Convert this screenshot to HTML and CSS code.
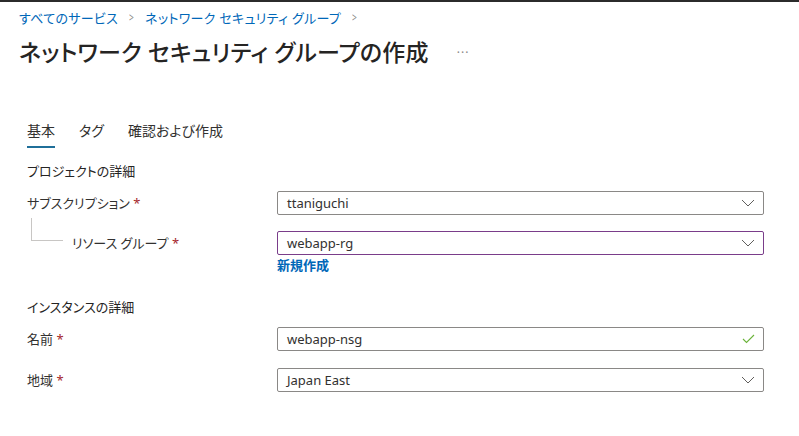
FILE: index.html
```html
<!DOCTYPE html>
<html lang="ja">
<head>
  <meta charset="UTF-8">
  <title>ネットワーク セキュリティ グループの作成</title>
  <link rel="stylesheet" href="styles.css">
</head>
<body>

<div class="topbar"></div>

<header class="page-head">
  <nav class="crumbs">
    <a href="#">すべてのサービス</a>
    <span class="sep">&gt;</span>
    <a href="#">ネットワーク セキュリティ グループ</a>
    <span class="sep">&gt;</span>
  </nav>
  <div class="title-row">
    <h1>ネットワーク セキュリティ グループの作成</h1>
    <span class="more">···</span>
  </div>
</header>

<main class="form">
  <div class="tabs">
    <div class="tab active">基本</div>
    <div class="tab">タグ</div>
    <div class="tab">確認および作成</div>
  </div>

  <h2 class="section first">プロジェクトの詳細</h2>

  <div class="row">
    <label class="label">サブスクリプション <span class="req">*</span></label>
    <div class="control">
      <div class="select">
        <span>ttaniguchi</span>
        <svg class="chev" width="14" height="8" viewBox="0 0 14 8"><path d="M1 1 L7 7 L13 1" fill="none" stroke="#605e5c" stroke-width="1"/></svg>
      </div>
    </div>
  </div>

  <div class="row child">
    <label class="label">リソース グループ <span class="req">*</span></label>
    <div class="control">
      <div class="select dirty">
        <span>webapp-rg</span>
        <svg class="chev" width="14" height="8" viewBox="0 0 14 8"><path d="M1 1 L7 7 L13 1" fill="none" stroke="#605e5c" stroke-width="1"/></svg>
      </div>
      <a class="new-link" href="#">新規作成</a>
    </div>
  </div>

  <h2 class="section">インスタンスの詳細</h2>

  <div class="row">
    <label class="label">名前 <span class="req">*</span></label>
    <div class="control">
      <div class="select">
        <span>webapp-nsg</span>
        <svg class="check" width="13" height="10" viewBox="0 0 13 10"><path d="M1 5 L4.5 8.5 L12 1" fill="none" stroke="#6bb33a" stroke-width="1.1"/></svg>
      </div>
    </div>
  </div>

  <div class="row next">
    <label class="label">地域 <span class="req">*</span></label>
    <div class="control">
      <div class="select">
        <span>Japan East</span>
        <svg class="chev" width="14" height="8" viewBox="0 0 14 8"><path d="M1 1 L7 7 L13 1" fill="none" stroke="#605e5c" stroke-width="1"/></svg>
      </div>
    </div>
  </div>
</main>

</body>
</html>
```

FILE: styles.css
```css
body {
  margin: 0;
  font-family: "Noto Sans", "Noto Sans CJK JP", sans-serif;
  font-feature-settings: "palt";
  font-size: 13px;
  color: #323130;
  background: #fff;
}

.topbar {
  height: 2px;
  background: #2b2b2b;
}

.page-head {
  padding: 0 19px;
}

.crumbs {
  margin-top: 6px;
  line-height: 20px;
  display: flex;
  align-items: center;
  gap: 10px;
}

.crumbs a {
  color: #0067b8;
  text-decoration: none;
  letter-spacing: 0.3px;
}

.crumbs .sep {
  color: #8a8886;
  font-size: 12px;
  transform: scaleX(0.7);
}

.title-row {
  margin-top: 8px;
  display: flex;
  align-items: center;
  height: 32px;
}

h1 {
  margin: 0;
  font-size: 23px;
  font-weight: 500;
  line-height: 32px;
  color: #252423;
  letter-spacing: 0.2px;
}

.more {
  margin-left: 28px;
  color: #8a8886;
  font-size: 12px;
  letter-spacing: 1px;
}

.form {
  padding-left: 27px;
}

.tabs {
  margin-top: 53px;
  display: flex;
  gap: 24px;
}

.tab {
  font-size: 14px;
  line-height: 20px;
  padding-bottom: 5px;
  border-bottom: 2px solid transparent;
}

.tab.active {
  border-bottom-color: #1f6f99;
}

.section {
  margin: 23px 0 0;
  font-size: 13px;
  font-weight: 400;
  line-height: 20px;
  color: #252423;
}

.section.first {
  margin-top: 13px;
}

.row {
  display: flex;
  margin-top: 10px;
}

.row.child {
  margin-top: 16px;
  position: relative;
}

.row.child::before {
  content: "";
  position: absolute;
  left: 4px;
  top: -13px;
  width: 31px;
  height: 22px;
  border-left: 1px solid #c8c6c4;
  border-bottom: 1px solid #c8c6c4;
}

.row.child .label {
  padding-left: 45px;
}

.row.next {
  margin-top: 17px;
}

.label {
  width: 250px;
  box-sizing: border-box;
  flex: none;
  line-height: 24px;
}

.req {
  color: #a4262c;
}

.control {
  width: 487px;
}

.select {
  height: 24px;
  box-sizing: border-box;
  border: 1px solid #8a8886;
  border-radius: 2px;
  display: flex;
  align-items: center;
  justify-content: space-between;
  padding: 0 8px 0 9px;
}

.select.dirty {
  border-color: #7a3d8a;
}

.new-link {
  display: block;
  margin-top: 1px;
  line-height: 18px;
  color: #0067b8;
  font-weight: 600;
  text-decoration: none;
}
```
